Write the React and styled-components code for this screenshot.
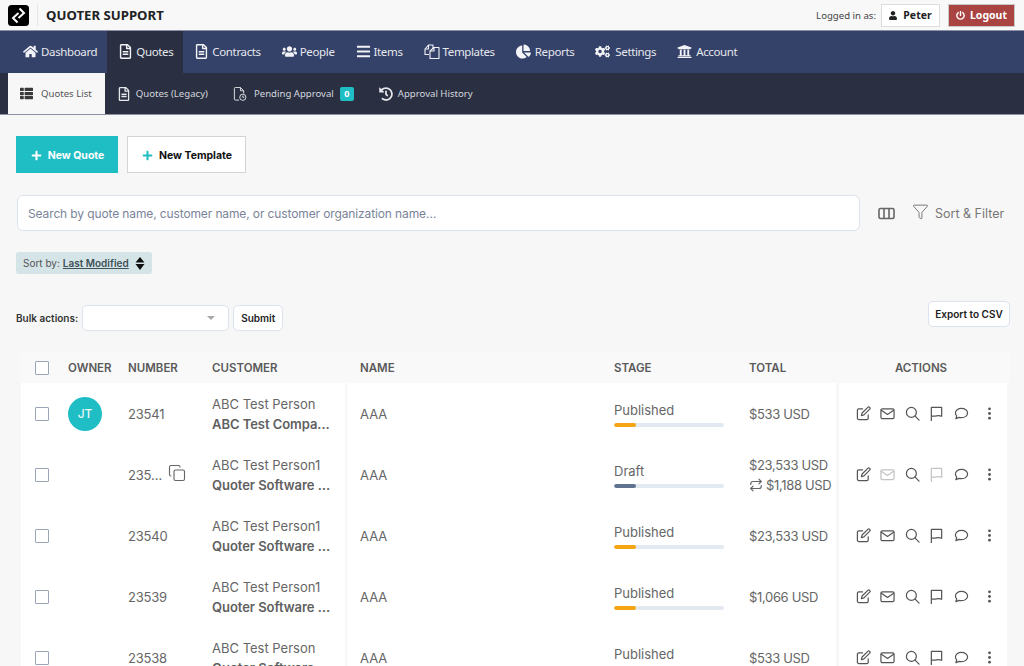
import React from "react";
import styled, { createGlobalStyle } from "styled-components";
import { FaHome, FaRegFileAlt, FaUsers, FaBars, FaChartPie, FaCogs, FaUniversity, FaThList, FaHistory, FaUser, FaPowerOff, FaPlus } from "react-icons/fa";
import { Copy, Repeat, Funnel } from "lucide-react";

const Global = createGlobalStyle`
  html, body { margin: 0; padding: 0; height: 666px; overflow: hidden; background: #f7f7f7; }
  * { box-sizing: border-box; }
  body { font-family: Inter, "Noto Sans", sans-serif; color: #5c5c5c; }
`;

const NAVFONT = `"Noto Sans", "Open Sans", sans-serif`;

const TopBar = styled.header`
  height: 31px; display: flex; align-items: center; padding: 0 9px 0 8px; background: #f8f8f8;
  border-bottom: 1px solid #8b90a3; font-family: ${NAVFONT};
`;
const Logo = styled.svg`width: 21px; height: 21px; flex: none;`;
const Brand = styled.div`
  margin-left: 8px; padding-left: 8px; border-left: 1px solid #e6e6e6; height: 22px; line-height: 22px;
  font-size: 13.2px; font-weight: 700; color: #222; flex: 1;
`;
const LoggedLabel = styled.span`font-size: 9.6px; color: #444; margin-right: 5px;`;
const UserButton = styled.div`
  height: 23px; width: 59px; display: flex; align-items: center; justify-content: center; gap: 6px;
  background: #fff; border: 1px solid #ddd; font-size: 10.5px; font-weight: 700; color: #222;
  svg { width: 8px; height: 9px; }
`;
const LogoutButton = styled.div`
  height: 23px; width: 67px; margin-left: 8px; display: flex; align-items: center; justify-content: center; gap: 5px;
  background: #a94442; border: 1px solid #c9c9c9; font-size: 10.5px; font-weight: 700; color: #fff;
  svg { width: 9px; height: 9px; }
`;

const MainNav = styled.nav`
  height: 42px; background: #344168; display: flex; padding-left: 12px; font-family: ${NAVFONT};
`;
const NavItem = styled.div`
  display: flex; align-items: center; padding: 0 10px 2px 11px; height: 42px; flex: none;
  font-size: 11.5px; letter-spacing: -0.36px; color: #e6e8ee; background: ${p => p.$active ? "#2a3042" : "transparent"};
`;
const NavIconSlot = styled.span`
  width: ${p => p.$w || 18}px; display: flex; align-items: center;
  svg { height: 15px; width: auto; color: #f2f3f6; }
`;
const SubNav = styled.nav`
  height: 42px; background: #2a3042; display: flex; padding-left: 8px; border-bottom: 1px solid #8b90a3;
  font-family: ${NAVFONT};
`;
const SubItem = styled.div`
  display: flex; align-items: center; padding: 0 ${p => p.$pr ?? 13}px 0 12px; height: 41px; flex: none;
  font-size: 9.6px; color: ${p => p.$active ? "#555" : "#d5d7de"}; background: ${p => p.$active ? "#f7f7f7" : "transparent"};
`;
const SubIconSlot = styled.span`
  width: ${p => p.$w || 19}px; display: flex; align-items: center;
  svg { height: ${p => p.$active ? 13 : 14}px; width: auto; color: ${p => p.$active ? "#3a3a3a" : "#e6e7ec"}; }
`;
const Badge = styled.span`
  background: #1fbdc4; color: #fff; border-radius: 2px; font-weight: 700; font-size: 9px; width: 14px; height: 14px;
  margin-left: 6px; display: inline-flex; align-items: center; justify-content: center;
`;

const Content = styled.main`padding: 21px 14px 0 16px;`;
const ButtonRow = styled.div`display: flex; gap: 9px;`;
const PrimaryButton = styled.div`
  width: 102px; height: 37px; background: #1fbdc4; color: #fff; font-weight: 700; font-size: 10.5px;
  display: flex; align-items: center; justify-content: center; gap: 6px; padding: 1px 0 0 1px;
  svg { width: 11px; height: 11px; }
`;
const SecondaryButton = styled(PrimaryButton)`
  width: 119px; background: #fff; color: #111; border: 1px solid #d4d4d8; svg { color: #1fbdc4; }
`;
const SearchRow = styled.div`display: flex; align-items: center; margin-top: 22px; padding-left: 1px;`;
const SearchBox = styled.div`
  width: 843px; height: 36px; background: #fff; border: 1px solid #dde3ed; border-radius: 6px;
  padding-left: 10px; display: flex; align-items: center; font-size: 12px; letter-spacing: -0.12px; color: #7a8499;
`;
const ColumnsIcon = styled.svg`width: 17px; height: 13px; margin-left: 18px;`;
const FilterLink = styled.div`
  margin-left: 17px; display: flex; align-items: center; gap: 6px; font-size: 12.5px; color: #777;
  svg { width: 17px; height: 17px; margin-top: -3px; }
`;
const SortPill = styled.div`
  margin-top: 21px; width: 136px; height: 22px; background: #d5e4e6; border-radius: 3px; display: flex; align-items: center;
  padding-left: 7px; font-size: 10px; color: #555;
  b { font-weight: 600; color: #3e5058; text-decoration: underline; margin-left: 3px; }
`;
const SortIcon = styled.svg`width: 10px; height: 13px; margin-left: 6px;`;
const BulkRow = styled.div`display: flex; align-items: flex-start; justify-content: space-between; margin-top: 27px;`;
const BulkLeft = styled.div`display: flex; align-items: center; margin-top: 4px;`;
const BulkLabel = styled.span`font-size: 10px; font-weight: 600; color: #333; margin-right: 4px;`;
const SelectBox = styled.div`
  width: 147px; height: 26px; background: #fff; border: 1px solid #dde3ed; border-radius: 5px; display: flex;
  align-items: center; justify-content: flex-end; padding-right: 13px;
  &::after { content: ""; border: 4px solid transparent; border-top-color: #a8a8a8; border-bottom: 0; }
`;
const LightButton = styled.div`
  height: ${p => p.$h || 26}px; width: ${p => p.$w}px; margin-left: ${p => p.$ml || 0}px; background: #fff;
  border: 1px solid #dde3ed; border-radius: 5px; display: flex; align-items: center; justify-content: center;
  font-size: 10px; font-weight: 600; color: #222;
`;

const Table = styled.section`margin: 21px -10px 0 4px; width: 990px;`;
const Columns = styled.div`
  display: grid; grid-template-columns: 324px 490px 168px; column-gap: 2px; padding-left: 1px;
`;
const HeadRow = styled(Columns)`
  height: 31px; background: #f9f9f9; align-items: center; font-size: 11.5px; font-weight: 600; color: #5a5a5a;
`;
const Row = styled(Columns)`height: 61px; font-size: 13px; color: #666;`;
const LeftCell = styled.div`
  display: grid; grid-template-columns: 33px 60px 84px 1fr; padding-left: 14px; align-items: center;
  background: ${p => p.$head ? "transparent" : "#fff"};
`;
const MidCell = styled.div`
  display: grid; grid-template-columns: 254px 135px 1fr; padding-left: 13px; align-items: center; margin-right: 1px;
  background: ${p => p.$head ? "transparent" : "#fff"};
`;
const RightCell = styled.div`
  display: flex; align-items: center; justify-content: center; padding-right: ${p => p.$head ? 4 : 0}px;
  background: ${p => p.$head ? "transparent" : "#fff"};
`;
const Check = styled.span`width: 14px; height: 14px; border: 1.5px solid #9aa5b8; background: #fff; border-radius: 1px; display: block;`;
const Avatar = styled.span`
  width: 34px; height: 34px; border-radius: 50%; background: #1fbdc4; color: #e9f8f9; font-size: 12px;
  display: flex; align-items: center; justify-content: center; font-weight: 500;
`;
const NumberCell = styled.div`display: flex; align-items: center; letter-spacing: -0.2px; gap: 6px; svg { width: 18px; height: 18px; margin-top: -3px; }`;
const CustomerBlock = styled.div`padding-top: 1px;`;
const Person = styled.div`line-height: 20px; font-size: 13px; white-space: nowrap;`;
const Company = styled.div`line-height: 21px; font-weight: 600; color: #5f5f5f; white-space: nowrap; letter-spacing: -0.05px;`;
const StageLabel = styled.div`font-size: 13px; line-height: 20px;`;
const Track = styled.div`width: 110px; height: 4px; border-radius: 2px; background: #e3e9f1; margin-top: 3px; overflow: hidden;`;
const Fill = styled.div`height: 100%; width: 22px; border-radius: 2px; background: ${p => p.$draft ? "#5f7391" : "#f5a512"};`;
const Total = styled.div`line-height: 20px; white-space: nowrap; letter-spacing: -0.34px; svg { width: 14px; height: 14px; vertical-align: -2px; margin-right: 3px; }`;
const Actions = styled.div`display: flex; align-items: center; gap: 9.5px; margin-left: 6px;`;
const ActionIcon = styled.svg`
  width: 15px; height: 15px; flex: none; color: ${p => p.$off ? "#c4c4c4" : "#555"};
  margin-left: ${p => p.$ml || 0}px; fill: none; stroke: currentColor; stroke-width: 1.3;
  stroke-linecap: round; stroke-linejoin: round;
`;
const KebabIcon = styled(ActionIcon)`fill: currentColor; stroke: none;`;

function TemplatesIcon(props) {
  return (
    <svg viewBox="0 0 16 15" fill="none" stroke="currentColor" strokeWidth="1.1" strokeLinejoin="round" {...props}>
      <path d="M5 10.5H1V5l3.5-4H9v4" />
      <path d="M4.5 1v4H1" />
      <path d="M6 14.5V7l4-3.5h5V14.5z" />
      <path d="M10 3.5V7H6" />
    </svg>
  );
}
function PendingIcon(props) {
  return (
    <svg viewBox="0 0 15 15" fill="none" stroke="currentColor" strokeWidth="1" {...props}>
      <path d="M6.5 14H2.5a1 1 0 0 1-1-1V1.5a1 1 0 0 1 1-1H8l3.5 3.5v3" />
      <path d="M8 .5V4h3.5" />
      <circle cx="10.5" cy="11" r="3.3" />
      <path d="M10.5 9.2V11h1.6" />
    </svg>
  );
}

const navItems = [
  [FaHome, "Dashboard"], [FaRegFileAlt, "Quotes", true], [FaRegFileAlt, "Contracts"], [FaUsers, "People"],
  [FaBars, "Items"], [TemplatesIcon, "Templates", false, 19], [FaChartPie, "Reports", false, 19], [FaCogs, "Settings", false, 20], [FaUniversity, "Account", false, 19],
];

const rows = [
  { num: "23541", person: "ABC Test Person", company: "ABC Test Compa…", stage: "Published", total: "$533 USD", owner: "JT" },
  { num: "235…", copy: true, person: "ABC Test Person1", company: "Quoter Software …", stage: "Draft", total: "$23,533 USD", rec: "$1,188 USD", draft: true },
  { num: "23540", person: "ABC Test Person1", company: "Quoter Software …", stage: "Published", total: "$23,533 USD" },
  { num: "23539", person: "ABC Test Person1", company: "Quoter Software …", stage: "Published", total: "$1,066 USD" },
  { num: "23538", person: "ABC Test Person", company: "Quoter Software …", stage: "Published", total: "$533 USD" },
];

export default function App() {
  return (
    <>
      <Global />
      <TopBar>
        <Logo viewBox="0 0 21 21">
          <rect width="21" height="21" rx="3.5" fill="#000" />
          <path d="M11.5 3.5L16 8l-5.5 5M9.5 17.5L5 13l5.5-5" fill="none" stroke="#fff" strokeWidth="2" />
        </Logo>
        <Brand>QUOTER SUPPORT</Brand>
        <LoggedLabel>Logged in as:</LoggedLabel>
        <UserButton><FaUser />Peter</UserButton>
        <LogoutButton><FaPowerOff />Logout</LogoutButton>
      </TopBar>
      <MainNav>
        {navItems.map(([Icon, label, active, w]) => (
          <NavItem key={label} $active={active}><NavIconSlot $w={w}><Icon /></NavIconSlot>{label}</NavItem>
        ))}
      </MainNav>
      <SubNav>
        <SubItem $active><SubIconSlot $active $w={21}><FaThList /></SubIconSlot>Quotes List</SubItem>
        <SubItem><SubIconSlot><FaRegFileAlt /></SubIconSlot>Quotes (Legacy)</SubItem>
        <SubItem><SubIconSlot $w={21}><PendingIcon /></SubIconSlot>Pending Approval<Badge>0</Badge></SubItem>
        <SubItem><SubIconSlot><FaHistory /></SubIconSlot>Approval History</SubItem>
      </SubNav>
      <Content>
        <ButtonRow>
          <PrimaryButton><FaPlus />New Quote</PrimaryButton>
          <SecondaryButton><FaPlus />New Template</SecondaryButton>
        </ButtonRow>
        <SearchRow>
          <SearchBox>Search by quote name, customer name, or customer organization name…</SearchBox>
          <ColumnsIcon viewBox="0 0 17 13" fill="none" stroke="#666" strokeWidth="1.6">
            <rect x="1" y="1.5" width="15" height="10" rx="1.5" />
            <path d="M6 1.5v10M11 1.5v10" />
          </ColumnsIcon>
          <FilterLink><Funnel strokeWidth={1.4} />Sort &amp; Filter</FilterLink>
        </SearchRow>
        <SortPill>
          Sort by: <b>Last Modified</b>
          <SortIcon viewBox="0 0 10 13" fill="#111"><path d="M5 0l4.5 5.5H.5zM5 13L.5 7h9z" /></SortIcon>
        </SortPill>
        <BulkRow>
          <BulkLeft>
            <BulkLabel>Bulk actions:</BulkLabel>
            <SelectBox />
            <LightButton $w={50} $ml={4}>Submit</LightButton>
          </BulkLeft>
          <LightButton $w={82} $h={26}>Export to CSV</LightButton>
        </BulkRow>
        <Table>
          <HeadRow>
            <LeftCell $head><Check /><span>OWNER</span><span>NUMBER</span><span>CUSTOMER</span></LeftCell>
            <MidCell $head><span>NAME</span><span>STAGE</span><span>TOTAL</span></MidCell>
            <RightCell $head>ACTIONS</RightCell>
          </HeadRow>
          {rows.map((r) => (
            <Row key={r.num}>
              <LeftCell>
                <Check />
                <div>{r.owner && <Avatar>{r.owner}</Avatar>}</div>
                <NumberCell>{r.num}{r.copy && <Copy strokeWidth={1.5} />}</NumberCell>
                <CustomerBlock>
                  <Person>{r.person}</Person>
                  <Company>{r.company}</Company>
                </CustomerBlock>
              </LeftCell>
              <MidCell>
                <span>AAA</span>
                <div>
                  <StageLabel>{r.stage}</StageLabel>
                  <Track><Fill $draft={r.draft} /></Track>
                </div>
                <Total>
                  <div>{r.total}</div>
                  {r.rec && <div><Repeat />{r.rec}</div>}
                </Total>
              </MidCell>
              <RightCell>
                <Actions>
                  <ActionIcon viewBox="0 0 16 16">
                    <path d="M13 9.500V13a1.500 1.500 0 0 1-1.500 1.500H3A1.500 1.500 0 0 1 1.500 13V4.500A1.500 1.500 0 0 1 3 3h4" />
                    <path d="M12.600 1.400a1.400 1.400 0 0 1 2 2L8.500 9.500l-2.800.8.8-2.800z" />
                  </ActionIcon>
                  <ActionIcon viewBox="0 0 16 16" $off={r.draft}>
                    <rect x="1" y="3" width="14" height="10.500" rx="1.500" />
                    <path d="M1.500 4.500L8 9l6.500-4.500" />
                  </ActionIcon>
                  <ActionIcon viewBox="0 0 16 16">
                    <circle cx="6.800" cy="6.800" r="5.300" />
                    <path d="M10.800 10.800L15 15" />
                  </ActionIcon>
                  <ActionIcon viewBox="0 0 16 16" $off={r.draft}>
                    <path d="M2.500 15.500V1.500h11v9.500c-2-1-3-1-5.500-.5s-3.500.5-5.500 0" />
                  </ActionIcon>
                  <ActionIcon viewBox="0 0 16 16">
                    <path d="M8 2.500c3.600 0 6.500 2.200 6.500 5s-2.900 5-6.500 5c-.9 0-1.800-.1-2.600-.4L2 13.500l.9-3C2 9.700 1.500 8.700 1.500 7.500c0-2.800 2.900-5 6.500-5z" />
                  </ActionIcon>
                  <KebabIcon viewBox="0 0 16 16" $ml={3.5}>
                    <circle cx="8" cy="3" r="1.500" /><circle cx="8" cy="8" r="1.500" /><circle cx="8" cy="13" r="1.500" />
                  </KebabIcon>
                </Actions>
              </RightCell>
            </Row>
          ))}
        </Table>
      </Content>
    </>
  );
}
